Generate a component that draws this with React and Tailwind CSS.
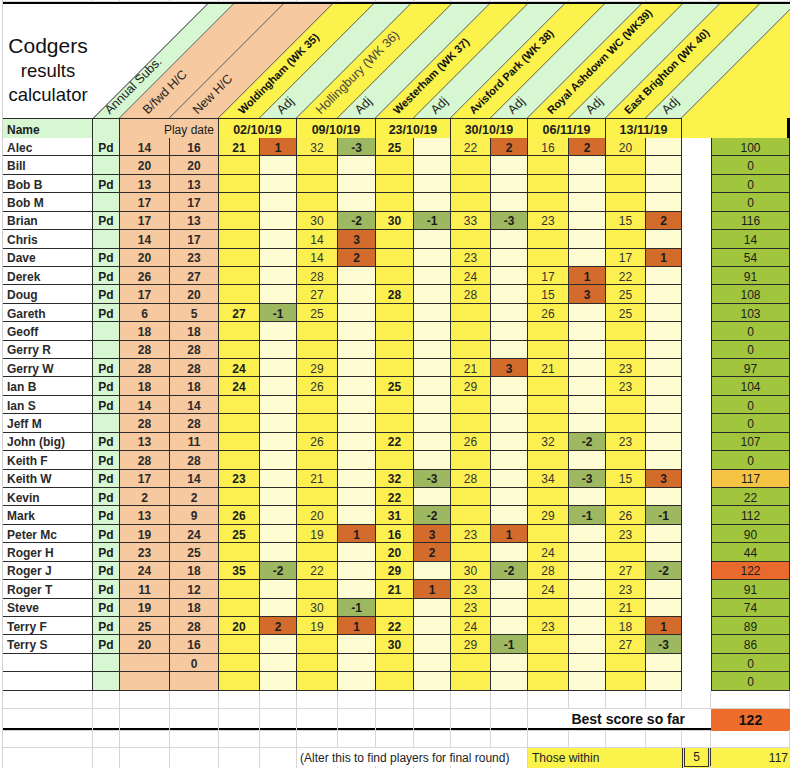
import React from "react";

// column widths of the sheet, left to right (Name .. Total)
const WIDTHS = [90, 27, 50, 49, 41, 37, 41, 38, 38, 37, 40, 37, 41, 37, 40, 36, 29, 79];
const GRID =
  "grid grid-cols-[90px_27px_50px_49px_41px_37px_41px_38px_38px_37px_40px_37px_41px_37px_40px_36px_29px_79px]";

const HEADER_H = 114;

const E = "";
const NONE = [E, E, E, E, E, E, E, E, E, E, E, E];

const rows = [
  ["Alec", "Pd", 14, 16, 21, 1, 32, -3, 25, E, 22, 2, 16, 2, 20, E, 100],
  ["Bill", E, 20, 20, ...NONE, 0],
  ["Bob B", "Pd", 13, 13, ...NONE, 0],
  ["Bob M", E, 17, 17, ...NONE, 0],
  ["Brian", "Pd", 17, 13, E, E, 30, -2, 30, -1, 33, -3, 23, E, 15, 2, 116],
  ["Chris", E, 14, 17, E, E, 14, 3, E, E, E, E, E, E, E, E, 14],
  ["Dave", "Pd", 20, 23, E, E, 14, 2, E, E, 23, E, E, E, 17, 1, 54],
  ["Derek", "Pd", 26, 27, E, E, 28, E, E, E, 24, E, 17, 1, 22, E, 91],
  ["Doug", "Pd", 17, 20, E, E, 27, E, 28, E, 28, E, 15, 3, 25, E, 108],
  ["Gareth", "Pd", 6, 5, 27, -1, 25, E, E, E, E, E, 26, E, 25, E, 103],
  ["Geoff", E, 18, 18, ...NONE, 0],
  ["Gerry R", E, 28, 28, ...NONE, 0],
  ["Gerry W", "Pd", 28, 28, 24, E, 29, E, E, E, 21, 3, 21, E, 23, E, 97],
  ["Ian B", "Pd", 18, 18, 24, E, 26, E, 25, E, 29, E, E, E, 23, E, 104],
  ["Ian S", "Pd", 14, 14, ...NONE, 0],
  ["Jeff M", E, 28, 28, ...NONE, 0],
  ["John (big)", "Pd", 13, 11, E, E, 26, E, 22, E, 26, E, 32, -2, 23, E, 107],
  ["Keith F", "Pd", 28, 28, ...NONE, 0],
  ["Keith W", "Pd", 17, 14, 23, E, 21, E, 32, -3, 28, E, 34, -3, 15, 3, 117],
  ["Kevin", "Pd", 2, 2, E, E, E, E, 22, E, E, E, E, E, E, E, 22],
  ["Mark", "Pd", 13, 9, 26, E, 20, E, 31, -2, E, E, 29, -1, 26, -1, 112],
  ["Peter Mc", "Pd", 19, 24, 25, E, 19, 1, 16, 3, 23, 1, E, E, 23, E, 90],
  ["Roger H", "Pd", 23, 25, E, E, E, E, 20, 2, E, E, 24, E, E, E, 44],
  ["Roger J", "Pd", 24, 18, 35, -2, 22, E, 29, E, 30, -2, 28, E, 27, -2, 122],
  ["Roger T", "Pd", 11, 12, E, E, E, E, 21, 1, 23, E, 24, E, 23, E, 91],
  ["Steve", "Pd", 19, 18, E, E, 30, -1, E, E, 23, E, E, E, 21, E, 74],
  ["Terry F", "Pd", 25, 28, 20, 2, 19, 1, 22, E, 24, E, 23, E, 18, 1, 89],
  ["Terry S", "Pd", 20, 16, E, E, E, E, 30, E, 29, -1, E, E, 27, -3, 86],
  [E, E, E, 0, ...NONE, 0],
  [E, E, E, E, ...NONE, 0],
];

const dates = ["02/10/19", "09/10/19", "23/10/19", "30/10/19", "06/11/19", "13/11/19"];

// header bands (col index -> colour)
const bands = [
  { col: 1, bg: "bg-[#d6f7d2]", text: "Annual Subs." },
  { col: 2, bg: "bg-[#f6c9a0]", text: "B/fwd H/C" },
  { col: 3, bg: "bg-[#f6c9a0]", text: "New H/C" },
  { col: 4, bg: "bg-[#fbf24c]", text: "Woldingham (WK 35)", bold: true },
  { col: 5, bg: "bg-[#d6f7d2]", text: "Adj" },
  { col: 6, bg: "bg-[#fbf24c]", text: "Hollingbury (WK 36)", faint: true },
  { col: 7, bg: "bg-[#d6f7d2]", text: "Adj" },
  { col: 8, bg: "bg-[#fbf24c]", text: "Westerham (WK 37)", bold: true },
  { col: 9, bg: "bg-[#d6f7d2]", text: "Adj" },
  { col: 10, bg: "bg-[#fbf24c]", text: "Avisford Park (WK 38)", bold: true },
  { col: 11, bg: "bg-[#d6f7d2]", text: "Adj" },
  { col: 12, bg: "bg-[#fbf24c]", text: "Royal Ashdown WC (WK39)", bold: true },
  { col: 13, bg: "bg-[#d6f7d2]", text: "Adj" },
  { col: 14, bg: "bg-[#fbf24c]", text: "East Brighton (WK 40)", bold: true },
  { col: 15, bg: "bg-[#d6f7d2]", text: "Adj" },
];

const colStart = (i) => WIDTHS.slice(0, i).reduce((a, b) => a + b, 0);

const cell = "flex items-center justify-center border-r border-b border-[#2b2b2b] pt-[2px]";
const grid = "border-r border-b border-[#d6d6d6]";

function adjBg(v) {
  if (v === E) return "bg-[#fefcd3]";
  return v > 0 ? "bg-[#d26b2b]" : "bg-[#9eb862]";
}

function totalBg(v) {
  if (v === 117) return "bg-[#f5c445]";
  if (v === 122) return "bg-[#ea6a2e]";
  return "bg-[#a1c63e]";
}

const Header = () => (
  <div className="relative flex h-[114px] overflow-hidden">
    <div className="flex w-[90px] shrink-0 flex-col items-center pt-[29px] text-[#111]">
      <span className="text-[21px] leading-[26px]">Codgers</span>
      <span className="text-[18.5px] leading-[24px]">results</span>
      <span className="text-[18.5px] leading-[24px]">calculator</span>
    </div>
    <div className="flex h-full shrink-0 origin-bottom-left [transform:skewX(-45deg)]">
      {bands.map((b) => (
        <div
          key={b.col}
          style={{ width: WIDTHS[b.col] }}
          className={`h-full shrink-0 border-r border-[#2b2b2b] ${b.bg} ${b.col === 1 ? "border-l" : ""}`}
        />
      ))}
      <div className="h-full w-[400px] shrink-0 bg-[#fbf24c]" />
    </div>
    {bands.map((b) => {
      // anchor on the band, a little way up from its foot
      const c = colStart(b.col) + WIDTHS[b.col] / 2;
      const t = 4;
      const p = 4;
      const x = c + 0.707 * t - 0.707 * p;
      const y = HEADER_H - 0.707 * t - 0.707 * p;
      return (
        <span
          key={"l" + b.col}
          style={{ left: x, top: y - 7 }}
          className={`absolute origin-left -rotate-45 whitespace-nowrap leading-[14px] ${
            b.bold
              ? "text-[10.9px] font-bold text-[#111]"
              : b.faint
              ? "text-[12.5px] text-[#444]"
              : "text-[12.5px] text-[#1c1c1c]"
          }`}
        >
          {b.text}
        </span>
      );
    })}
  </div>
);

const NameRow = () => (
  <div className={`${GRID} h-[20px] text-[12px] text-[#1c1c1c]`}>
    <div className={`${cell} justify-start border-t bg-[#d6f7d2] pl-[4px] font-bold`}>Name</div>
    <div className={`${cell} border-t bg-[#d6f7d2]`} />
    <div className={`${cell} col-span-2 justify-end border-t bg-[#f6c9a0] pr-[4px]`}>Play date</div>
    {dates.map((d) => (
      <div key={d} className={`${cell} col-span-2 border-t bg-[#fbf24c] text-[12.5px] font-bold`}>
        {d}
      </div>
    ))}
    <div className="col-span-2 border-r-[3px] border-black bg-[#fbf24c]" />
  </div>
);

const DataRow = ({ r }) => {
  const [name, pd, bf, nh] = r;
  const scores = r.slice(4, 16);
  const total = r[16];
  return (
    <div className={`${GRID} h-[18.43px] text-[12px] leading-none text-[#1c1c1c]`}>
      <div className={`${cell} justify-start bg-white pl-[4px] font-bold text-[#2a2a2a]`}>{name}</div>
      <div className={`${cell} bg-[#d6f7d2] font-bold`}>{pd}</div>
      <div className={`${cell} bg-[#f6c9a0] font-bold text-[#2a2a2a]`}>{bf}</div>
      <div className={`${cell} bg-[#f6c9a0] font-bold text-[#2a2a2a]`}>{nh}</div>
      {scores.map((v, i) => {
        const isAdj = i % 2 === 1;
        const boldScore = i === 0 || i === 4;
        return (
          <div
            key={i}
            className={`${cell} ${isAdj ? adjBg(v) + " font-bold" : "bg-[#fbf04f]"} ${
              !isAdj && boldScore ? "font-bold" : ""
            } ${!isAdj && !boldScore ? "text-[#333]" : ""}`}
          >
            {v}
          </div>
        );
      })}
      <div className="bg-white" />
      <div
        className={`flex items-center justify-center border-x border-b border-[#2b2b2b] pt-[2px] ${totalBg(total)}`}
      >
        {total}
      </div>
    </div>
  );
};

const BlankRow = ({ h = "h-[18.43px]" }) => (
  <div className={`${GRID} ${h}`}>
    {WIDTHS.map((w, i) => (
      <div key={i} className={grid} />
    ))}
  </div>
);

export default function App() {
  return (
    <div className="h-[768px] w-[790px] overflow-hidden bg-white pl-[2px] font-['Liberation_Sans',Arial,sans-serif]">
      <div className="border-l border-[#d0d0d0]">
        <BlankRow h="h-[2px]" />
        <div className="h-[2px] bg-black" />
        <Header />
        <NameRow />
        {rows.map((r, i) => (
          <DataRow key={i} r={r} />
        ))}
        <BlankRow />
        <div className={`${GRID} h-[18.43px]`}>
          {WIDTHS.slice(0, 12).map((w, i) => (
            <div key={i} className={grid} />
          ))}
          <div className="col-span-5 flex items-center justify-end border-b border-[#d6d6d6] pr-[26px] text-[14px] font-bold text-[#111]">
            Best score so far
          </div>
          <div className="flex items-center justify-center bg-[#ee6d2d] text-[14px] font-bold text-[#111]">122</div>
        </div>
        <div className="h-[2px] bg-black" />
        <BlankRow h="h-[18px]" />
        <div className={`${GRID} h-[18px] text-[12px] text-[#222]`}>
          {WIDTHS.slice(0, 6).map((w, i) => (
            <div key={i} className={grid} />
          ))}
          <div className={`col-span-6 flex items-center whitespace-nowrap pl-[3px] ${grid}`}>
            (Alter this to find players for final round)
          </div>
          <div className="col-span-4 flex items-center bg-[#fbf24c] pl-[4px]">Those within</div>
          <div className="flex items-center justify-center border-x-[3px] border-b-[3px] border-double border-[#333] bg-[#fbf24c]">
            5
          </div>
          <div className="flex items-center justify-end bg-[#fbf24c] pr-[2px]">117</div>
        </div>
        <BlankRow />
      </div>
    </div>
  );
}
